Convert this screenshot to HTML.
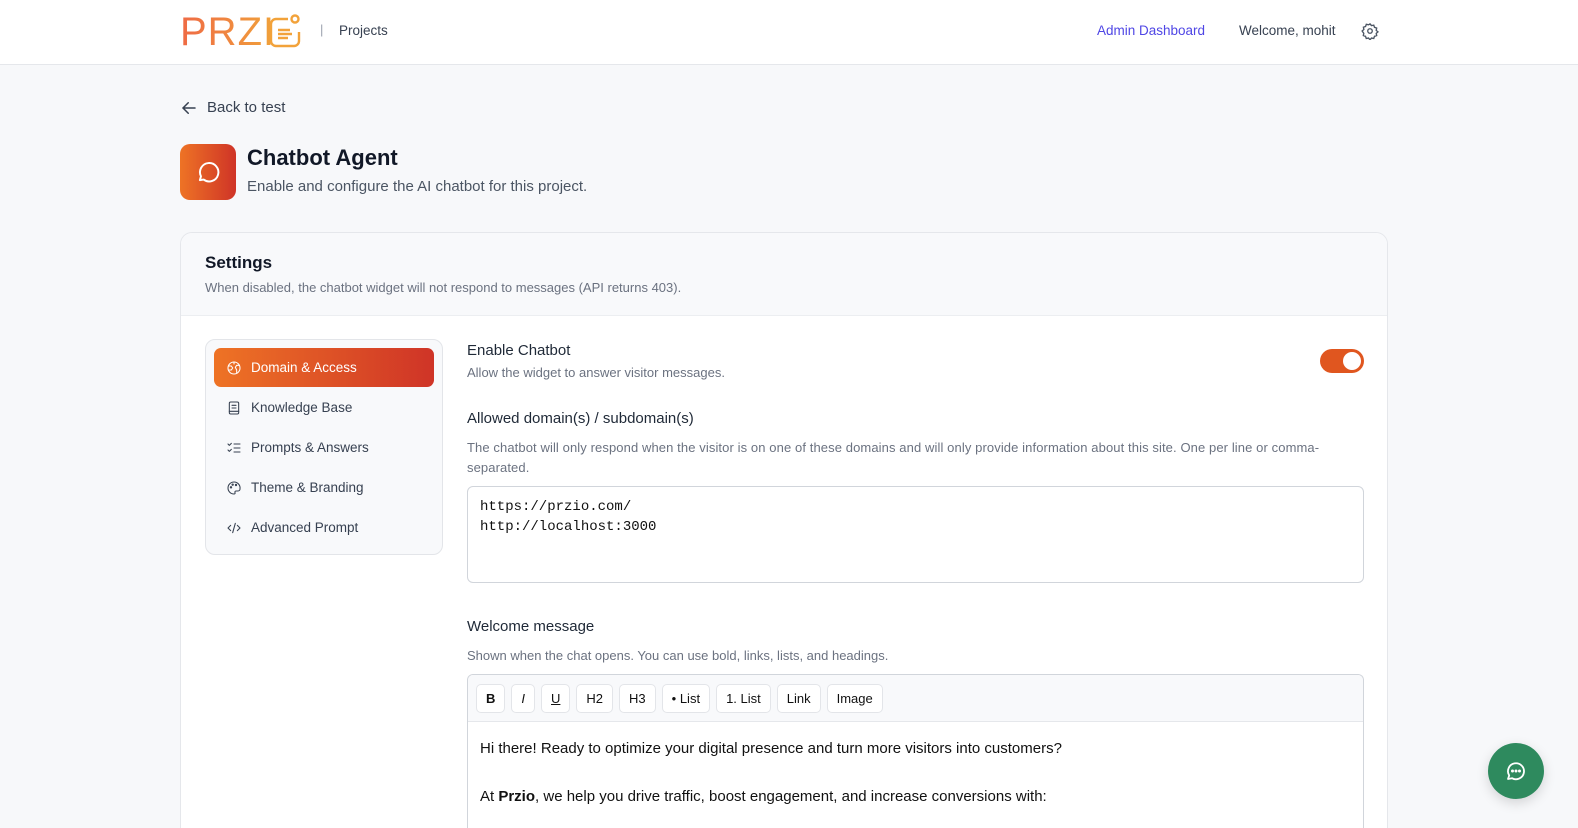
<!DOCTYPE html>
<html style="width:1578px;height:828px;overflow:hidden"><head><meta charset="utf-8"><style>
*{box-sizing:border-box;margin:0;padding:0}
body{width:1578px;height:828px;overflow:hidden;background:#f7f8fa;font-family:"Liberation Sans",sans-serif;color:#1f2937;position:relative}
.hdr{position:absolute;left:0;top:0;width:1578px;height:65px;background:#fff;border-bottom:1px solid #e5e7eb}
.abs{position:absolute}
.card{position:absolute;left:180px;top:232px;width:1208px;height:596px;background:#fff;border:1px solid #e5e7eb;border-bottom:none;border-radius:12px 12px 0 0;overflow:hidden}
.card .top{height:83px;background:#f8f9fb;border-bottom:1px solid #eceef1}
.side{position:absolute;left:205px;top:339px;width:238px;height:216px;background:#f8f9fb;border:1px solid #e3e5e9;border-radius:10px}
.item{position:absolute;left:8px;width:220px;height:39px;border-radius:7px;font-size:13.5px;color:#374151;display:flex;align-items:center;padding-left:12px;gap:9px}
.item.act{background:linear-gradient(90deg,#ee7325,#cf3427);color:#fff}
.item svg{width:16px;height:16px;fill:none;stroke:currentColor;stroke-width:1.6;stroke-linecap:round;stroke-linejoin:round}
.lbl{font-size:15px;color:#1f2937}
.sub{font-size:13px;color:#6b7280}
.btn{display:inline-flex;align-items:center;justify-content:center;height:29px;border:1px solid #e3e5e9;border-radius:5px;background:#fff;font-size:13px;color:#111;padding:0 9px;margin-right:6px}
</style></head><body>
<div class="hdr">
  <div class="abs" style="left:180px;top:10px;font-size:40px;line-height:44px;letter-spacing:1px;background:linear-gradient(90deg,#ef6a45,#f0a23a);-webkit-background-clip:text;color:transparent;font-weight:300">PRZI</div>
  <svg class="abs" style="left:268px;top:13px" width="36" height="36" viewBox="0 0 36 36" fill="none" stroke="#f2a23a" stroke-width="2.4"><path d="M20 6H8a5 5 0 0 0-5 5v17a5 5 0 0 0 5 5h18a5 5 0 0 0 5-5V19"/><circle cx="27" cy="6" r="3.5"/><path d="M10 17h12M10 21h14M10 25h10"/></svg>
  <div class="abs" style="left:320px;top:22px;color:#9ca3af;font-size:13px">|</div>
  <div class="abs" style="left:339px;top:23px;font-size:13.5px;color:#374151">Projects</div>
  <div class="abs" style="left:1097px;top:23px;font-size:13.5px;color:#4f46e5">Admin Dashboard</div>
  <div class="abs" style="left:1239px;top:23px;font-size:13.5px;color:#374151">Welcome, mohit</div>
  <svg class="abs" style="left:1361px;top:22px" width="18" height="18" viewBox="0 0 24 24" fill="none" stroke="#4b5563" stroke-width="1.8"><circle cx="12" cy="12" r="3"/><path d="M12 2.5l2 2.3 3-.6 1 2.9 2.9 1-.6 3 2.3 2-2.3 2 .6 3-2.9 1-1 2.9-3-.6-2 2.3-2-2.3-3 .6-1-2.9-2.9-1 .6-3L1.5 12l2.3-2-.6-3 2.9-1 1-2.9 3 .6z"/></svg>
</div>
<svg class="abs" style="left:180px;top:99px" width="18" height="18" viewBox="0 0 24 24" fill="none" stroke="#374151" stroke-width="2" stroke-linecap="round"><path d="M20 12H5M11 5l-7 7 7 7"/></svg>
<div class="abs" style="left:207px;top:99px;font-size:15px;color:#374151">Back to test</div>
<div class="abs" style="left:180px;top:144px;width:56px;height:56px;border-radius:10px;background:linear-gradient(90deg,#ee7325,#cf3427)">
  <svg style="position:absolute;left:15px;top:15px" width="26" height="26" viewBox="0 0 24 24" fill="none" stroke="#fff" stroke-width="1.8" stroke-linejoin="round"><path d="M4.5 19.5l1-3.5A8.5 8.5 0 1 1 8 19z"/></svg>
</div>
<div class="abs" style="left:247px;top:145px;font-size:22px;font-weight:bold;color:#111827">Chatbot Agent</div>
<div class="abs" style="left:247px;top:178px;font-size:15px;color:#4b5563">Enable and configure the AI chatbot for this project.</div>
<div class="card"><div class="top"></div></div>
<div class="abs" style="left:205px;top:253px;font-size:17px;font-weight:bold;color:#111827">Settings</div>
<div class="abs sub" style="left:205px;top:280px">When disabled, the chatbot widget will not respond to messages (API returns 403).</div>
<div class="side">
  <div class="item act" style="top:8px"><svg viewBox="0 0 24 24"><circle cx="12" cy="12" r="9"/><path d="M4 9h4l2 3-2 3H5M20 8h-4l-2 3 2 4v4M12 3v3"/></svg>Domain &amp; Access</div>
  <div class="item" style="top:48px"><svg viewBox="0 0 24 24"><rect x="5" y="3" width="14" height="18" rx="2"/><path d="M9 8h6M9 12h6M5 17h14"/></svg>Knowledge Base</div>
  <div class="item" style="top:88px"><svg viewBox="0 0 24 24"><path d="M3 6l2 2 3-3M3 15l2 2 3-3M12 6h9M12 12h9M12 18h9"/></svg>Prompts &amp; Answers</div>
  <div class="item" style="top:128px"><svg viewBox="0 0 24 24"><path d="M12 3a9 9 0 0 0 0 18c1.5 0 2-1 1.5-2s0-2.5 1.5-2.5H18a3 3 0 0 0 3-3A9 9 0 0 0 12 3z"/><circle cx="7.5" cy="11" r="1"/><circle cx="10" cy="7" r="1"/><circle cx="15" cy="7.5" r="1"/></svg>Theme &amp; Branding</div>
  <div class="item" style="top:168px"><svg viewBox="0 0 24 24"><path d="M7 8l-4 4 4 4M17 8l4 4-4 4M14 5l-4 14"/></svg>Advanced Prompt</div>
</div>
<div class="abs lbl" style="left:467px;top:342px">Enable Chatbot</div>
<div class="abs sub" style="left:467px;top:365px">Allow the widget to answer visitor messages.</div>
<div class="abs" style="left:1320px;top:349px;width:44px;height:24px;border-radius:12px;background:#e0561f"><div style="position:absolute;right:3px;top:3px;width:18px;height:18px;border-radius:50%;background:#fff"></div></div>
<div class="abs lbl" style="left:467px;top:410px">Allowed domain(s) / subdomain(s)</div>
<div class="abs sub" style="left:467px;top:438px;width:910px;line-height:20px;letter-spacing:0.1px">The chatbot will only respond when the visitor is on one of these domains and will only provide information about this site. One per line or comma-<br>separated.</div>
<div class="abs" style="left:467px;top:486px;width:897px;height:97px;border:1px solid #d1d5db;border-radius:6px;background:#fff;padding:10px 12px;font-family:'Liberation Mono',monospace;font-size:14px;line-height:20px;color:#111">https://przio.com/<br>http://localhost:3000</div>
<div class="abs lbl" style="left:467px;top:618px">Welcome message</div>
<div class="abs sub" style="left:467px;top:648px">Shown when the chat opens. You can use bold, links, lists, and headings.</div>
<div class="abs" style="left:467px;top:674px;width:897px;height:154px;border:1px solid #d1d5db;border-bottom:none;border-radius:6px 6px 0 0;background:#fff;overflow:hidden">
  <div style="height:47px;background:#f8f9fb;border-bottom:1px solid #e5e7eb;padding:9px 0 0 8px;display:flex">
    <span class="btn" style="font-weight:bold">B</span><span class="btn" style="font-style:italic">I</span><span class="btn" style="text-decoration:underline">U</span><span class="btn">H2</span><span class="btn">H3</span><span class="btn">• List</span><span class="btn">1. List</span><span class="btn">Link</span><span class="btn">Image</span>
  </div>
  <div style="padding:15px 12px;font-size:15px;color:#111;line-height:24px">Hi there! Ready to optimize your digital presence and turn more visitors into customers?<br><br>At <b>Przio</b>, we help you drive traffic, boost engagement, and increase conversions with:</div>
</div>
<div class="abs" style="left:1488px;top:743px;width:56px;height:56px;border-radius:50%;background:#2e8a5e;box-shadow:0 4px 12px rgba(0,0,0,.15)">
  <svg style="position:absolute;left:16px;top:16px" width="24" height="24" viewBox="0 0 24 24" fill="none" stroke="#fff" stroke-width="1.8" stroke-linejoin="round"><path d="M4 20l1.2-3.5A8 8 0 1 1 8 19.2z"/><circle cx="8.5" cy="12" r=".6" fill="#fff"/><circle cx="12" cy="12" r=".6" fill="#fff"/><circle cx="15.5" cy="12" r=".6" fill="#fff"/></svg>
</div>
</body></html>
